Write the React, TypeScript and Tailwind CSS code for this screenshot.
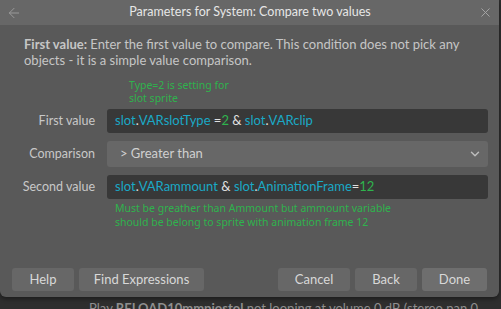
import { ChevronDown, ArrowLeft, X } from "lucide-react";

const font = { fontFamily: 'Lato, "Noto Sans", sans-serif' };
const note = { fontFamily: '"Noto Sans", sans-serif' };

function Row({ label, children }: { label: string; children: React.ReactNode }) {
  return (
    <div className="flex items-center">
      <div className="w-[95px] shrink-0 text-right text-[12.5px] text-[#c8c8c8]">{label}</div>
      <div className="ml-[12px] flex-1">{children}</div>
    </div>
  );
}

export default function App() {
  return (
    <div className="relative h-[309px] w-[501px] overflow-hidden bg-[#2e2e2e]" style={font}>
      {/* text from the event sheet behind */}
      <div className="absolute left-[89px] top-[299px] whitespace-nowrap text-[13px] text-[#8f8f8f]">
        Play <span className="font-bold">RELOAD10mmpiostol</span> not looping at volume 0 dB (stereo pan 0
      </div>

      {/* dialog */}
      <div className="relative flex h-[297px] w-[499px] flex-col overflow-hidden rounded-b-[6px] bg-[#595959] shadow-[0_2px_4px_rgba(0,0,0,0.4)]">
        {/* title bar */}
        <div className="flex h-[25px] shrink-0 items-center bg-[#676767] px-[6px]">
          <ArrowLeft size={16} strokeWidth={1.5} className="text-[#9a9a9a]" />
          <div className="flex-1 text-center text-[12.5px] text-[#e6e6e6]">Parameters for System: Compare two values</div>
          <X size={15} strokeWidth={1.5} className="text-[#a8a8a8]" />
        </div>

        {/* description */}
        <div className="px-[24px] pt-[11px] text-[13px] leading-[16px] text-[#c6c6c6]">
          <span className="font-bold">First value:</span> Enter the first value to compare. This condition does not pick any objects - it is a simple value comparison.
        </div>

        <div className="mt-[11px] pl-[129px] text-[10.5px] leading-[13px] text-[#2fb34d]" style={note}>
          Type=2 is setting for
          <br />
          slot sprite
        </div>

        <div className="mt-[4px] flex flex-col gap-[8px] pr-[11px]">
          <Row label="First value">
            <div className="flex h-[24px] items-center rounded-[3px] bg-[#383838] px-[8px] text-[13px] text-[#e0e0e0]">
              <span className="text-[#1aa9c6]">slot</span>.<span className="text-[#1aa9c6]">VARslotType</span>&nbsp;=<span className="text-[#2fb34d]">2</span>&nbsp;&amp;&nbsp;<span className="text-[#1aa9c6]">slot</span>.<span className="text-[#1aa9c6]">VARclip</span>
            </div>
          </Row>
          <Row label="Comparison">
            <div className="flex h-[26px] items-center justify-between rounded-[3px] bg-[#676767] pl-[13px] pr-[6px] text-[13px] text-[#d0d0d0]">
              <span>&gt; Greater than</span>
              <ChevronDown size={14} strokeWidth={2.5} className="text-[#bbbbbb]" />
            </div>
          </Row>
          <Row label="Second value">
            <div className="flex h-[24px] items-center rounded-[3px] bg-[#383838] px-[8px] text-[13px] text-[#e0e0e0]">
              <span className="text-[#1aa9c6]">slot</span>.<span className="text-[#1aa9c6]">VARammount</span>&nbsp;&amp;&nbsp;<span className="text-[#1aa9c6]">slot</span>.<span className="text-[#1aa9c6]">AnimationFrame</span>=<span className="text-[#2fb34d]">12</span>
            </div>
          </Row>
        </div>

        <div className="mt-[2px] pl-[115px] text-[10.5px] leading-[14px] text-[#2fb34d]" style={note}>
          Must be greather than Ammount but ammount variable
          <br />
          should be belong to sprite with animation frame 12
        </div>

        {/* buttons */}
        <div className="mt-auto flex items-center gap-[5px] px-[12px] pb-[6px] text-[13px] text-[#d8d8d8]">
          <button className="h-[23px] w-[62px] rounded-[3px] bg-[#676767]">Help</button>
          <button className="h-[23px] w-[125px] rounded-[3px] bg-[#676767]">Find Expressions</button>
          <div className="flex-1" />
          <button className="h-[23px] w-[72px] rounded-[3px] bg-[#676767]">Cancel</button>
          <button className="h-[23px] w-[62px] rounded-[3px] bg-[#676767]">Back</button>
          <button className="h-[23px] w-[65px] rounded-[3px] bg-[#6e6e6e]">Done</button>
        </div>
      </div>
    </div>
  );
}
